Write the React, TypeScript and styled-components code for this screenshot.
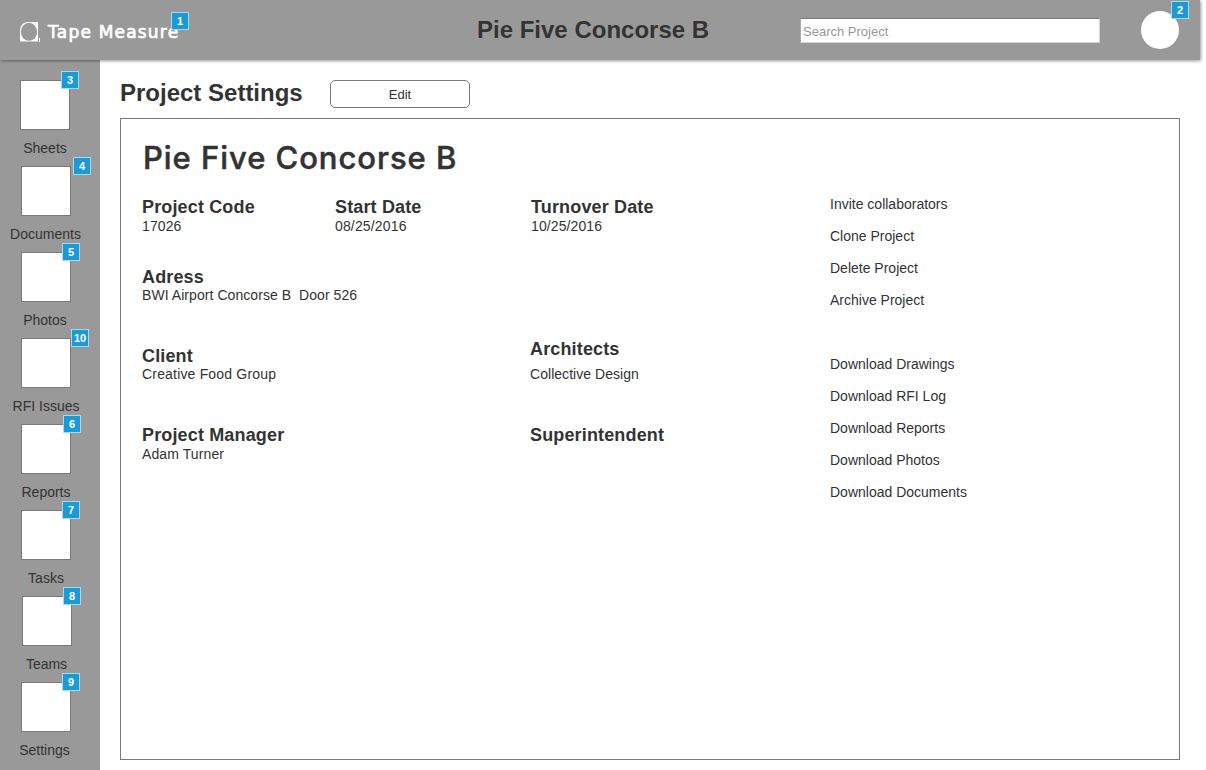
import React from "react";
import styled, { createGlobalStyle } from "styled-components";

const GlobalStyle = createGlobalStyle`
  *, *::before, *::after { box-sizing: border-box; }
  body {
    margin: 0;
    background: #fff;
    color: #333;
    font-family: "Liberation Sans", Arial, sans-serif;
    font-size: 14px;
    line-height: 16px;
  }
  h1, h2, h3, p, ul { margin: 0; padding: 0; }
  ul { list-style: none; }
`;

const Page = styled.div`
  width: 1206px;
  height: 770px;
  display: flex;
  flex-direction: column;
  overflow: hidden;
`;

const TopBar = styled.header`
  position: relative;
  flex: none;
  display: flex;
  align-items: center;
  width: 1200px;
  height: 60px;
  background: #999;
  box-shadow: 1px 1px 3px rgba(0, 0, 0, 0.4);
`;

const Brand = styled.div`
  position: relative;
  display: flex;
  align-items: center;
  gap: 8px;
  width: 477px;
  height: 60px;
  padding: 3px 0 0 20px;
`;

const LogoMark = styled.svg`
  display: block;
  flex: none;
`;

const BrandName = styled.span`
  color: #fff;
  font: 400 17px/24px "DejaVu Sans", sans-serif;
  letter-spacing: 1.2px;
  -webkit-text-stroke: 0.7px #fff;
  white-space: nowrap;
`;

const BarTitle = styled.h1`
  width: 323px;
  font-size: 24px;
  line-height: 28px;
  white-space: nowrap;
`;

const SearchInput = styled.input`
  width: 300px;
  height: 25px;
  margin-top: 1px;
  padding: 1px 2px 0;
  border: 1px solid #d4d4d4;
  border-top-color: #777;
  border-left-color: #aaa;
  border-radius: 0;
  background: #fff;
  font: 13px "Liberation Sans", Arial, sans-serif;
  outline: none;
  &::placeholder { color: #999; opacity: 1; }
`;

const Account = styled.div`
  position: relative;
  width: 38px;
  height: 38px;
  margin-left: 41px;
`;

const Avatar = styled.div`
  width: 38px;
  height: 38px;
  border-radius: 50%;
  background: #fff;
`;

const Badge = styled.span<{ $x: number; $y: number }>`
  position: absolute;
  left: ${(p) => p.$x}px;
  top: ${(p) => p.$y}px;
  width: 18px;
  height: 18px;
  border: 1px solid #a3daf3;
  background: #1c9ad6;
  color: #fff;
  font-size: 11px;
  font-weight: 700;
  line-height: 16px;
  text-align: center;
`;

const Body = styled.div`
  flex: 1;
  display: flex;
  min-height: 0;
`;

const Sidebar = styled.nav`
  flex: none;
  width: 100px;
  padding-top: 20px;
  background: #999;
`;

const NavItem = styled.a`
  position: relative;
  display: flex;
  flex-direction: column;
  gap: 10px;
  height: 86px;
`;

const NavThumb = styled.span<{ $inset: number }>`
  width: 50px;
  height: 50px;
  margin-left: ${(p) => p.$inset}px;
  border: 1px solid #797979;
  background: #fff;
`;

const NavLabel = styled.span<{ $width: number }>`
  width: ${(p) => p.$width}px;
  text-align: center;
  white-space: nowrap;
`;

const Main = styled.main`
  flex: none;
  width: 1100px;
  padding: 20px 20px 10px;
  display: flex;
  flex-direction: column;
  gap: 10px;
`;

const Heading = styled.div`
  display: flex;
  height: 28px;
`;

const PageTitle = styled.h2`
  width: 210px;
  font-size: 24px;
  line-height: 25px;
`;

const EditButton = styled.button`
  width: 140px;
  height: 28px;
  padding: 0;
  border: 1px solid #797979;
  border-radius: 5px;
  background: #fff;
  color: #333;
  font: 13px "Liberation Sans", Arial, sans-serif;
`;

const Panel = styled.section`
  height: 642px;
  display: flex;
  border: 1px solid #797979;
`;

const Details = styled.div`
  width: 709px;
  padding: 18px 0 0 21px;
`;

const ProjectName = styled.h2`
  height: 60px;
  padding-left: 1px;
  font: 500 31px/42px Inter, sans-serif;
  letter-spacing: 0.95px;
  -webkit-text-stroke: 0.5px #333;
  white-space: nowrap;
`;

const FieldRow = styled.div<{ $columns: string; $height: number }>`
  display: grid;
  grid-template-columns: ${(p) => p.$columns};
  align-items: start;
  height: ${(p) => p.$height}px;
`;

const Field = styled.div<{ $gap?: number; $raise?: number }>`
  display: flex;
  flex-direction: column;
  gap: ${(p) => p.$gap ?? 0}px;
  margin-top: ${(p) => -(p.$raise ?? 0)}px;
`;

const FieldName = styled.h3`
  font-size: 18px;
  line-height: 20px;
  letter-spacing: 0.15px;
`;

const FieldValue = styled.p<{ $tracking?: number }>`
  letter-spacing: ${(p) => p.$tracking ?? 0.1}px;
  white-space: pre;
`;

const Actions = styled.div`
  display: flex;
  flex-direction: column;
  gap: 32px;
  padding-top: 69px;
`;

const ActionLink = styled.li`
  line-height: 32px;
`;

const navItems = [
  { label: "Sheets", badge: 3, badgeX: 61, inset: 20, width: 90 },
  { label: "Documents", badge: 4, badgeX: 73, inset: 21, width: 91 },
  { label: "Photos", badge: 5, badgeX: 62, inset: 21, width: 90 },
  { label: "RFI Issues", badge: 10, badgeX: 71, inset: 21, width: 92 },
  { label: "Reports", badge: 6, badgeX: 63, inset: 21, width: 92 },
  { label: "Tasks", badge: 7, badgeX: 62, inset: 21, width: 92 },
  { label: "Teams", badge: 8, badgeX: 63, inset: 22, width: 93 },
  { label: "Settings", badge: 9, badgeX: 62, inset: 21, width: 89 },
];

const actionGroups = [
  ["Invite collaborators", "Clone Project", "Delete Project", "Archive Project"],
  ["Download Drawings", "Download RFI Log", "Download Reports", "Download Photos", "Download Documents"],
];

export default function App() {
  return (
    <Page>
      <GlobalStyle />
      <TopBar>
        <Brand>
          <LogoMark width="20" height="20" viewBox="0 0 20 20">
            <path d="M8 0H18V19.5H0V9C0 4 3 0 8 0Z" fill="#fff" />
            <ellipse cx="9" cy="9.8" rx="8.2" ry="9" fill="#999" />
            <path d="M19.5 16v4" stroke="#fff" />
          </LogoMark>
          <BrandName>Tape Measure</BrandName>
          <Badge $x={171} $y={12}>1</Badge>
        </Brand>
        <BarTitle>Pie Five Concorse B</BarTitle>
        <SearchInput placeholder="Search Project" />
        <Account>
          <Avatar />
          <Badge $x={30} $y={-10}>2</Badge>
        </Account>
      </TopBar>
      <Body>
        <Sidebar>
          {navItems.map((item) => (
            <NavItem key={item.label}>
              <NavThumb $inset={item.inset} />
              <NavLabel $width={item.width}>{item.label}</NavLabel>
              <Badge $x={item.badgeX} $y={-9}>{item.badge}</Badge>
            </NavItem>
          ))}
        </Sidebar>
        <Main>
          <Heading>
            <PageTitle>Project Settings</PageTitle>
            <EditButton>Edit</EditButton>
          </Heading>
          <Panel>
            <Details>
              <ProjectName>Pie Five Concorse B</ProjectName>
              <FieldRow $columns="193px 196px 1fr" $height={70}>
                <Field $gap={1}>
                  <FieldName>Project Code</FieldName>
                  <FieldValue>17026</FieldValue>
                </Field>
                <Field $gap={1}>
                  <FieldName>Start Date</FieldName>
                  <FieldValue $tracking={0.15}>08/25/2016</FieldValue>
                </Field>
                <Field $gap={1}>
                  <FieldName>Turnover Date</FieldName>
                  <FieldValue>10/25/2016</FieldValue>
                </Field>
              </FieldRow>
              <FieldRow $columns="1fr" $height={79}>
                <Field>
                  <FieldName>Adress</FieldName>
                  <FieldValue $tracking={0.06}>{"BWI Airport Concorse B  Door 526"}</FieldValue>
                </Field>
              </FieldRow>
              <FieldRow $columns="388px 1fr" $height={79}>
                <Field>
                  <FieldName>Client</FieldName>
                  <FieldValue $tracking={0.18}>Creative Food Group</FieldValue>
                </Field>
                <Field $gap={7} $raise={7}>
                  <FieldName>Architects</FieldName>
                  <FieldValue $tracking={0.04}>Collective Design</FieldValue>
                </Field>
              </FieldRow>
              <FieldRow $columns="388px 1fr" $height={60}>
                <Field $gap={1}>
                  <FieldName>Project Manager</FieldName>
                  <FieldValue>Adam Turner</FieldValue>
                </Field>
                <Field>
                  <FieldName>Superintendent</FieldName>
                </Field>
              </FieldRow>
            </Details>
            <Actions>
              {actionGroups.map((group) => (
                <ul key={group[0]}>
                  {group.map((name) => (
                    <ActionLink key={name}>{name}</ActionLink>
                  ))}
                </ul>
              ))}
            </Actions>
          </Panel>
        </Main>
      </Body>
    </Page>
  );
}
